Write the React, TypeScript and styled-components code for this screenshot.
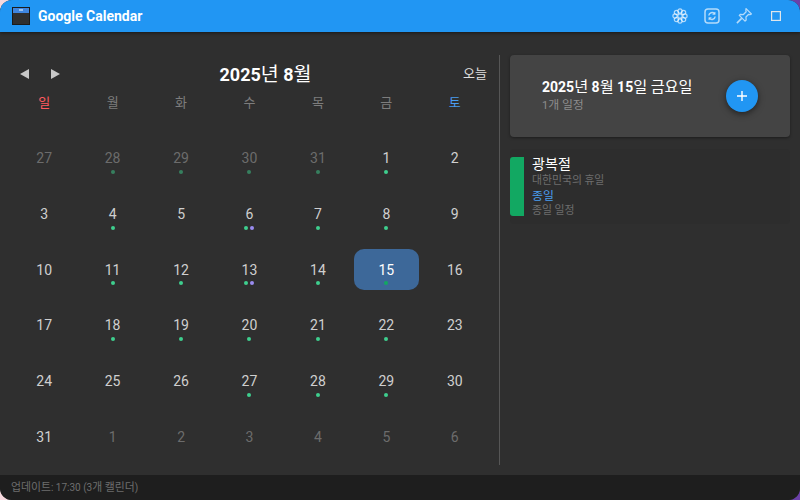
import React from "react";
import styled, { createGlobalStyle } from "styled-components";

const Global = createGlobalStyle`
  html, body { margin: 0; padding: 0; width: 800px; height: 500px; overflow: hidden; }
  body {
    background: linear-gradient(90deg, #f6d9de 0%, #c9a8d0 50%, #6a3fa8 100%);
    font-family: Roboto, "Noto Sans CJK KR", sans-serif;
  }
  * { box-sizing: border-box; }
`;

const Window = styled.div`
  width: 800px;
  height: 500px;
  border-radius: 12px;
  overflow: hidden;
  display: flex;
  flex-direction: column;
  background: #2f2f2f;
`;

const TitleBar = styled.header`
  height: 32px;
  flex: none;
  background: #2196f3;
  display: flex;
  align-items: center;
  padding: 0 12px;
  box-shadow: 0 1px 3px rgba(0, 0, 0, 0.5);
  z-index: 1;
`;

const AppName = styled.span`
  margin-left: 8px;
  font-size: 14px;
  font-weight: 700;
  color: #fff;
`;

const TitleActions = styled.div`
  margin-left: auto;
  display: flex;
  align-items: center;
  gap: 16px;
  margin-right: 4px;
`;

const ActionIcon = styled.svg`
  width: 16px;
  height: 16px;
  display: block;
  color: rgba(255, 255, 255, 0.66);
`;

const Hg = styled.span`
  font-size: 1.085em;
  font-weight: 400;
  line-height: 1;
`;

const Main = styled.main`
  flex: 1;
  min-height: 0;
  display: flex;
  padding: 23px 10px 10px;
`;

const CalendarPane = styled.section`
  width: 490px;
  flex: none;
  border-right: 1px solid #565656;
  padding-right: 10px;
  display: flex;
  flex-direction: column;
`;

const MonthHeader = styled.div`
  height: 38px;
  flex: none;
  display: flex;
  align-items: center;
  padding: 0 2px 0 10px;
`;

const NavButtons = styled.div`
  display: flex;
  gap: 22px;
`;

const Arrow = styled.span<{ $dir: "left" | "right" }>`
  width: 0;
  height: 0;
  border-top: 5px solid transparent;
  border-bottom: 5px solid transparent;
  ${(p) =>
    p.$dir === "left"
      ? "border-right: 9px solid #c8c8c8;"
      : "border-left: 9px solid #c8c8c8;"}
`;

const MonthTitle = styled.h1`
  flex: 1;
  margin: 0;
  text-align: center;
  font-size: 18px;
  font-weight: 700;
  color: #fff;
  padding-left: 8px;
`;

const TodayButton = styled.button`
  border: 0;
  padding: 0;
  background: none;
  color: #e0e0e0;
  font: inherit;
  font-size: 12px;
`;

const WeekRow = styled.div`
  display: grid;
  grid-template-columns: repeat(7, 1fr);
  height: 20px;
  flex: none;
  align-items: center;
`;

const WeekDay = styled.span<{ $color: string }>`
  text-align: center;
  font-size: 12px;
  color: ${(p) => p.$color};
`;

const DayGrid = styled.div`
  flex: 1;
  margin-top: 17px;
  display: grid;
  grid-template-columns: repeat(7, 1fr);
  grid-template-rows: repeat(6, 1fr);
`;

const DayCell = styled.div<{ $today?: boolean }>`
  position: relative;
  margin: 7px 2px;
  border-radius: 10px;
  display: flex;
  align-items: center;
  justify-content: center;
  background: ${(p) => (p.$today ? "#3d6899" : "transparent")};
`;

const DayNumber = styled.span<{ $muted?: boolean; $today?: boolean }>`
  font-size: 14px;
  color: ${(p) => (p.$today ? "#fff" : p.$muted ? "#6c6c6c" : "#cfcfcf")};
`;

const Dots = styled.div`
  position: absolute;
  left: 0;
  right: 0;
  bottom: 5px;
  display: flex;
  justify-content: center;
  gap: 2px;
`;

const Dot = styled.i<{ $color: string; $muted?: boolean }>`
  width: 4px;
  height: 4px;
  border-radius: 50%;
  background: ${(p) => p.$color};
  opacity: ${(p) => (p.$muted ? 0.5 : 1)};
`;

const DetailPane = styled.aside`
  flex: 1;
  padding-left: 10px;
  display: flex;
  flex-direction: column;
  gap: 12px;
`;

const DateCard = styled.div`
  height: 82px;
  background: #444444;
  border-radius: 4px;
  box-shadow: 0 1px 3px rgba(0, 0, 0, 0.4);
  display: flex;
  align-items: center;
  padding: 0 32px;
`;

const DateText = styled.div`
  flex: 1;
  display: flex;
  flex-direction: column;
  gap: 3px;
`;

const DateTitle = styled.div`
  font-size: 14px;
  line-height: 17px;
  font-weight: 700;
  color: #fff;
`;

const DateSub = styled.div`
  font-size: 11px;
  line-height: 14px;
  color: #8d8d8d;
`;

const AddButton = styled.button`
  width: 32px;
  height: 32px;
  border: 0;
  padding: 0;
  border-radius: 50%;
  background: #2196f3;
  box-shadow: 0 2px 6px rgba(0, 0, 0, 0.5);
  display: flex;
  align-items: center;
  justify-content: center;
`;

const EventCard = styled.article`
  display: flex;
  height: 75px;
  padding: 8px 0;
  background: #2d2d2d;
  border-radius: 4px;
`;

const EventBar = styled.div`
  width: 14px;
  flex: none;
  background: #12a862;
  border-radius: 3px 0 0 3px;
`;

const EventBody = styled.div`
  margin-left: 8px;
  display: flex;
  flex-direction: column;
`;

const EventName = styled.div`
  font-size: 13px;
  line-height: 13px;
  color: #fff;
`;

const EventDesc = styled.div`
  font-size: 10px;
  line-height: 14px;
  margin-top: 3px;
  color: #6e6e6e;
`;

const EventTime = styled.div`
  font-size: 11px;
  line-height: 14px;
  margin-top: 2px;
  color: #4a9df0;
`;

const EventNote = styled.div`
  font-size: 10px;
  line-height: 14px;
  color: #6e6e6e;
`;

const Footer = styled.footer`
  height: 25px;
  flex: none;
  background: #1e1e1e;
  display: flex;
  align-items: center;
  padding: 0 11px;
  font-size: 10px;
  color: #6e6e6e;
`;

const GREEN = "#3ecf8e";
const PURPLE = "#9a8cf0";

type Day = { n: number; muted?: boolean; dots?: string[] };

const d = (n: number, dots = 0, muted = false): Day => ({
  n,
  muted,
  dots: dots === 2 ? [GREEN, PURPLE] : dots === 1 ? [GREEN] : [],
});

const days: Day[] = [
  d(27, 0, true), d(28, 1, true), d(29, 1, true), d(30, 1, true), d(31, 1, true), d(1, 1), d(2),
  d(3), d(4, 1), d(5), d(6, 2), d(7, 1), d(8, 1), d(9),
  d(10), d(11, 1), d(12, 1), d(13, 2), d(14, 1), d(15, 1), d(16),
  d(17), d(18, 1), d(19, 1), d(20, 1), d(21, 1), d(22, 1), d(23),
  d(24), d(25), d(26), d(27, 1), d(28, 1), d(29, 1), d(30),
  d(31), d(1, 0, true), d(2, 0, true), d(3, 0, true), d(4, 0, true), d(5, 0, true), d(6, 0, true),
];

const weekdays: [string, string][] = [
  ["일", "#ff5a5f"], ["월", "#7d7d7d"], ["화", "#7d7d7d"], ["수", "#7d7d7d"],
  ["목", "#7d7d7d"], ["금", "#7d7d7d"], ["토", "#4a9df0"],
];

// Hangul runs are set regular and slightly larger, keeping digits and Latin in Roboto.
const Ko = ({ children }: { children: string }) => (
  <span>
    {children.split(/([가-힣]+)/).map((part, i) =>
      /[가-힣]/.test(part) ? <Hg key={i}>{part}</Hg> : part
    )}
  </span>
);

const AppLogo = () => (
  <svg width="18" height="18" viewBox="0 0 18 18">
    <rect width="18" height="18" fill="#1b1b1b" />
    <rect x="1" y="1" width="16" height="16" fill="#2f2f2f" />
    <rect x="1" y="1" width="16" height="5" fill="#3f86e0" />
    <rect x="7" y="2" width="4" height="2" fill="#9cc4f0" />
  </svg>
);

const FlowerIcon = () => (
  <ActionIcon viewBox="0 0 16 16" fill="none" stroke="currentColor" strokeWidth="1.2">
    <circle cx="8" cy="8" r="2.2" />
    <circle cx="8" cy="3" r="2.1" />
    <circle cx="8" cy="13" r="2.1" />
    <circle cx="3" cy="8" r="2.1" />
    <circle cx="13" cy="8" r="2.1" />
    <circle cx="4.4" cy="4.4" r="2.1" />
    <circle cx="11.6" cy="4.4" r="2.1" />
    <circle cx="4.4" cy="11.6" r="2.1" />
    <circle cx="11.6" cy="11.6" r="2.1" />
  </ActionIcon>
);

const SyncIcon = () => (
  <ActionIcon viewBox="0 0 16 16" fill="none" stroke="currentColor" strokeWidth="1.5">
    <rect x="1" y="1" width="14" height="14" rx="3" />
    <path d="M4.8 7.5a3.3 3.3 0 0 1 5.8-1.7M11.2 8.5a3.3 3.3 0 0 1-5.8 1.7" />
    <path d="M10.9 3.9v2.4H8.5M5.1 12.1V9.7h2.4" strokeWidth="1.1" />
  </ActionIcon>
);

const PinIcon = () => (
  <ActionIcon viewBox="1 1 14 14" fill="none" stroke="currentColor" strokeWidth="1.1" strokeLinejoin="round">
    <path d="M9.8 1.5l4.7 4.7-1.2.6-1.2-.3-2.4 2.4.2 2.6-1 1-5-5 1-1 2.6.2 2.4-2.4-.3-1.2z" />
    <path d="M5.9 10.1L1.8 14.2" strokeWidth="1.4" />
  </ActionIcon>
);

const SquareIcon = () => (
  <ActionIcon viewBox="0 0 16 16" fill="none" stroke="#dfe6ea" strokeWidth="1.2">
    <rect x="3.6" y="3.6" width="8.8" height="8.8" />
  </ActionIcon>
);

export default function App() {
  return (
    <>
      <Global />
      <Window>
        <TitleBar>
          <AppLogo />
          <AppName>Google Calendar</AppName>
          <TitleActions>
            <FlowerIcon />
            <SyncIcon />
            <PinIcon />
            <SquareIcon />
          </TitleActions>
        </TitleBar>
        <Main>
          <CalendarPane>
            <MonthHeader>
              <NavButtons>
                <Arrow $dir="left" />
                <Arrow $dir="right" />
              </NavButtons>
              <MonthTitle><Ko>2025년 8월</Ko></MonthTitle>
              <TodayButton><Ko>오늘</Ko></TodayButton>
            </MonthHeader>
            <WeekRow>
              {weekdays.map(([w, c]) => (
                <WeekDay key={w} $color={c}><Ko>{w}</Ko></WeekDay>
              ))}
            </WeekRow>
            <DayGrid>
              {days.map((day, i) => {
                const today = i === 19;
                return (
                  <DayCell key={i} $today={today}>
                    <DayNumber $muted={day.muted} $today={today}>{day.n}</DayNumber>
                    {day.dots && day.dots.length > 0 && (
                      <Dots>
                        {day.dots.map((c, j) => (
                          <Dot key={j} $color={today ? "#12a862" : c} $muted={day.muted} />
                        ))}
                      </Dots>
                    )}
                  </DayCell>
                );
              })}
            </DayGrid>
          </CalendarPane>
          <DetailPane>
            <DateCard>
              <DateText>
                <DateTitle><Ko>2025년 8월 15일 금요일</Ko></DateTitle>
                <DateSub><Ko>1개 일정</Ko></DateSub>
              </DateText>
              <AddButton aria-label="일정 추가">
                <svg width="12" height="12" viewBox="0 0 12 12">
                  <path d="M6 1v10M1 6h10" stroke="#fff" strokeWidth="1.4" />
                </svg>
              </AddButton>
            </DateCard>
            <EventCard>
              <EventBar />
              <EventBody>
                <EventName><Ko>광복절</Ko></EventName>
                <EventDesc><Ko>대한민국의 휴일</Ko></EventDesc>
                <EventTime><Ko>종일</Ko></EventTime>
                <EventNote><Ko>종일 일정</Ko></EventNote>
              </EventBody>
            </EventCard>
          </DetailPane>
        </Main>
        <Footer><Ko>업데이트: 17:30 (3개 캘린더)</Ko></Footer>
      </Window>
    </>
  );
}
